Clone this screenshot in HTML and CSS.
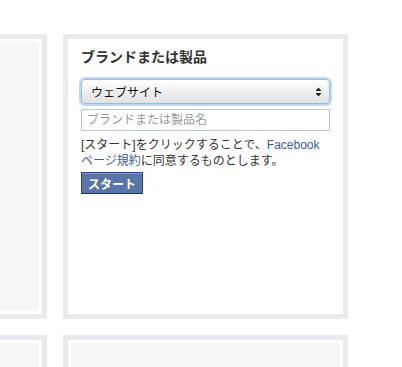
FILE: index.html
```html
<!DOCTYPE html>
<html lang="ja">
<head>
    <meta charset="UTF-8">
    <title>ページを作成</title>
    <link rel="stylesheet" href="styles.css">
</head>
<body>
    <div class="grid">
        <div class="card"><div class="fill"></div></div>
        <div class="card active">
            <h3 class="title">ブランドまたは製品</h3>
            <div class="select">
                <span>ウェブサイト</span>
                <svg class="arrows" width="7" height="10" viewBox="0 0 7 10">
                    <path d="M3.5 0.5 L6.5 4 L0.5 4 Z M3.5 9.5 L6.5 6 L0.5 6 Z" fill="#222"/>
                </svg>
            </div>
            <input class="name" type="text" placeholder="ブランドまたは製品名">
            <p class="terms">[スタート]をクリックすることで、<a href="#">Facebook</a><br><a href="#">ページ規約</a>に同意するものとします。</p>
            <button class="start">スタート</button>
        </div>
        <div class="card"><div class="fill"></div></div>
        <div class="card"><div class="fill"></div></div>
    </div>
</body>
</html>
```

FILE: styles.css
```css
* {
    margin: 0;
    padding: 0;
    box-sizing: border-box;
}
body {
    background: #fff;
    font-family: "Lucida Grande", "Liberation Sans", "Noto Sans CJK JP", sans-serif;
    font-size: 12px;
    color: #333;
    overflow: hidden;
}
/* カードの並び */
.grid {
    display: grid;
    grid-template-columns: 285px 285px;
    grid-auto-rows: 285px;
    gap: 16px;
    margin-left: -238px;
    padding-top: 34px;
}
.card {
    border: 5px solid #e9eaed;
    padding: 3px;
    display: flex;
}
.fill {
    flex: 1;
    background: #f6f7f8;
}
.card.active {
    flex-direction: column;
    padding: 9px 13px;
}
.title {
    font-size: 14px;
    line-height: 18px;
    font-weight: bold;
    color: #333;
}
.select {
    margin-top: 13px;
    height: 25px;
    border: 1px solid #9ab8e0;
    border-radius: 4px;
    box-shadow: 0 0 0 2px #c2d7f3;
    background: linear-gradient(#ffffff, #ececec 60%, #e2e2e2);
    display: flex;
    align-items: center;
    justify-content: space-between;
    padding: 0 7px 0 9px;
    color: #111;
    font-size: 12px;
}
.arrows {
    display: block;
}
.name {
    margin-top: 5px;
    height: 22px;
    border: 1px solid #bdc7d8;
    padding: 0 5px;
    font-family: inherit;
    font-size: 12px;
    outline: none;
}
.name::placeholder {
    color: #999;
}
.terms {
    margin-top: 6px;
    line-height: 16px;
    color: #333;
}
.terms a {
    color: #3b5998;
    text-decoration: none;
}
.start {
    margin-top: 3px;
    align-self: flex-start;
    width: 62px;
    height: 22px;
    background: #5b74a8;
    border: 1px solid #29447e;
    border-bottom-color: #1a356e;
    box-shadow: inset 0 1px 0 #8a9cc2;
    color: #fff;
    font-family: inherit;
    font-size: 12px;
    font-weight: bold;
}
```
